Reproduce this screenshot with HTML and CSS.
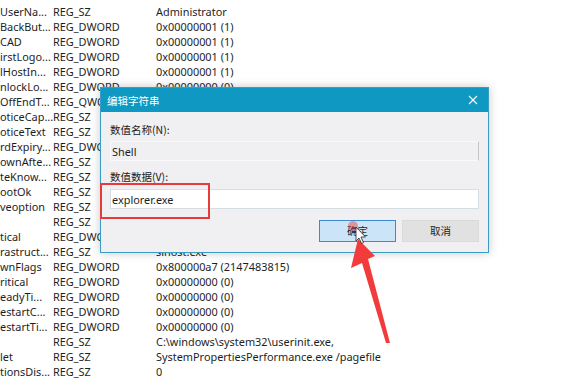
FILE: index.html
```html
<!DOCTYPE html>
<html lang="zh-CN">
<head>
    <meta charset="UTF-8">
    <title>编辑字符串</title>
    <link rel="stylesheet" href="styles.css">
</head>
<body>
    <div class="reg-list">
        <div class="row"><span class="name">UserNa...</span><span class="type">REG_SZ</span><span class="data">Administrator</span></div>
        <div class="row"><span class="name">BackBut...</span><span class="type">REG_DWORD</span><span class="data">0x00000001 (1)</span></div>
        <div class="row"><span class="name">CAD</span><span class="type">REG_DWORD</span><span class="data">0x00000001 (1)</span></div>
        <div class="row"><span class="name">irstLogo...</span><span class="type">REG_DWORD</span><span class="data">0x00000001 (1)</span></div>
        <div class="row"><span class="name">lHostIn...</span><span class="type">REG_DWORD</span><span class="data">0x00000001 (1)</span></div>
        <div class="row"><span class="name">nlockLo...</span><span class="type">REG_DWORD</span><span class="data">0x00000000 (0)</span></div>
        <div class="row"><span class="name">OffEndT...</span><span class="type">REG_QWORD</span><span class="data">0x00000000 (0)</span></div>
        <div class="row"><span class="name">oticeCap...</span><span class="type">REG_SZ</span><span class="data"></span></div>
        <div class="row"><span class="name">oticeText</span><span class="type">REG_SZ</span><span class="data"></span></div>
        <div class="row"><span class="name">rdExpiry...</span><span class="type">REG_DWORD</span><span class="data">0x00000005 (5)</span></div>
        <div class="row"><span class="name">ownAfte...</span><span class="type">REG_SZ</span><span class="data">0</span></div>
        <div class="row"><span class="name">teKnow...</span><span class="type">REG_SZ</span><span class="data"></span></div>
        <div class="row"><span class="name">ootOk</span><span class="type">REG_SZ</span><span class="data">1</span></div>
        <div class="row"><span class="name">veoption</span><span class="type">REG_SZ</span><span class="data">0</span></div>
        <div class="row"><span class="name"></span><span class="type">REG_SZ</span><span class="data">explorer.exe</span></div>
        <div class="row"><span class="name">tical</span><span class="type">REG_DWORD</span><span class="data">0x00000000 (0)</span></div>
        <div class="row"><span class="name">rastruct...</span><span class="type">REG_SZ</span><span class="data">sihost.exe</span></div>
        <div class="row"><span class="name">wnFlags</span><span class="type">REG_DWORD</span><span class="data">0x800000a7 (2147483815)</span></div>
        <div class="row"><span class="name">ritical</span><span class="type">REG_DWORD</span><span class="data">0x00000000 (0)</span></div>
        <div class="row"><span class="name">eadyTi...</span><span class="type">REG_DWORD</span><span class="data">0x00000000 (0)</span></div>
        <div class="row"><span class="name">estartC...</span><span class="type">REG_DWORD</span><span class="data">0x00000000 (0)</span></div>
        <div class="row"><span class="name">estartTi...</span><span class="type">REG_DWORD</span><span class="data">0x00000000 (0)</span></div>
        <div class="row"><span class="name"></span><span class="type">REG_SZ</span><span class="data">C:\windows\system32\userinit.exe,</span></div>
        <div class="row"><span class="name">let</span><span class="type">REG_SZ</span><span class="data">SystemPropertiesPerformance.exe /pagefile</span></div>
        <div class="row"><span class="name">tionsDis...</span><span class="type">REG_SZ</span><span class="data">0</span></div>
    </div>

    <!-- edit string dialog -->
    <div class="dialog">
        <div class="dialog-title">
            <span>编辑字符串</span>
            <svg class="close" width="10" height="10" viewBox="0 0 10 10">
                <path d="M1 1 L9 9 M9 1 L1 9" stroke="#fff" stroke-width="1.1" fill="none"/>
            </svg>
        </div>
        <div class="dialog-body">
            <div class="label">数值名称(N):</div>
            <div class="field readonly">Shell</div>
            <div class="label second">数值数据(V):</div>
            <div class="field value">explorer.exe</div>
            <div class="buttons">
                <div class="btn primary">确定</div>
                <div class="btn">取消</div>
            </div>
        </div>
        <div class="highlight"></div>
    </div>

    <svg class="overlay" width="570" height="389" viewBox="0 0 570 389">
        <circle cx="353" cy="226" r="5" fill="rgba(230,60,60,0.45)"/>
        <polygon points="358,239 375,256 368,259 390,343 386,343 362,263 351,268" fill="#f23b3b"/>
        <polygon points="356,227 356,241 359,238 361.5,243.5 363.5,242.5 361,237 365.5,237" fill="#fff" stroke="#222" stroke-width="0.8"/>
    </svg>
</body>
</html>
```

FILE: styles.css
```css
* {
    margin: 0;
    padding: 0;
    box-sizing: border-box;
}
body {
    width: 570px;
    height: 389px;
    overflow: hidden;
    position: relative;
    background: #fff;
    font-family: "Noto Sans", "Noto Sans CJK SC", sans-serif;
    color: #1e1e1e;
}
.reg-list {
    padding-top: 4px;
    font-size: 10.9px;
}
.row {
    display: flex;
    height: 15px;
    line-height: 15px;
    white-space: nowrap;
}
.name {
    width: 53px;
    overflow: hidden;
}
.type {
    width: 103px;
}
.data {
    flex: 1;
}

.dialog {
    position: absolute;
    left: 100px;
    top: 87px;
    width: 389px;
    height: 166px;
    background: #f0eff2;
    border: 1px solid #3a9cc4;
    box-shadow: 0 0 9px rgba(0, 0, 0, 0.22);
    font-family: "Noto Sans CJK SC", "Noto Sans", sans-serif;
}
.dialog-title {
    height: 24px;
    background: #0f98c1;
    color: #fff;
    font-size: 10.5px;
    display: flex;
    align-items: center;
    justify-content: space-between;
    padding: 0 10px 0 6px;
}
.dialog-body {
    padding: 11px 9px 0 9px;
    font-size: 10.5px;
}
.label {
    height: 14px;
    line-height: 14px;
    color: #222;
}
.label.second {
    margin-top: 9px;
}
.field {
    height: 20px;
    line-height: 19px;
    margin-top: 4px;
    padding-left: 1px;
    font-family: "Noto Sans", sans-serif;
    font-size: 10.9px;
}
.field.readonly {
    background: #f0eff2;
    border: 1px solid #f9f9fb;
    border-right-color: #c4c4c8;
}
.field.value {
    margin-top: 5px;
    background: #fff;
    border: 1px solid #d6dee4;
}
.buttons {
    display: flex;
    justify-content: flex-end;
    gap: 6px;
    margin-top: 11px;
}
.btn {
    width: 77px;
    height: 22px;
    line-height: 20px;
    text-align: center;
    background: #e1e1e1;
    border: 1px solid #dadada;
    font-size: 10.5px;
}
.btn.primary {
    background: #cce4f7;
    border-color: #3c8ad0;
}
.highlight {
    position: absolute;
    left: -1px;
    top: 95px;
    width: 110px;
    height: 36px;
    border: 2.5px solid #e8393c;
}
.overlay {
    position: absolute;
    left: 0;
    top: 0;
    pointer-events: none;
}
```
